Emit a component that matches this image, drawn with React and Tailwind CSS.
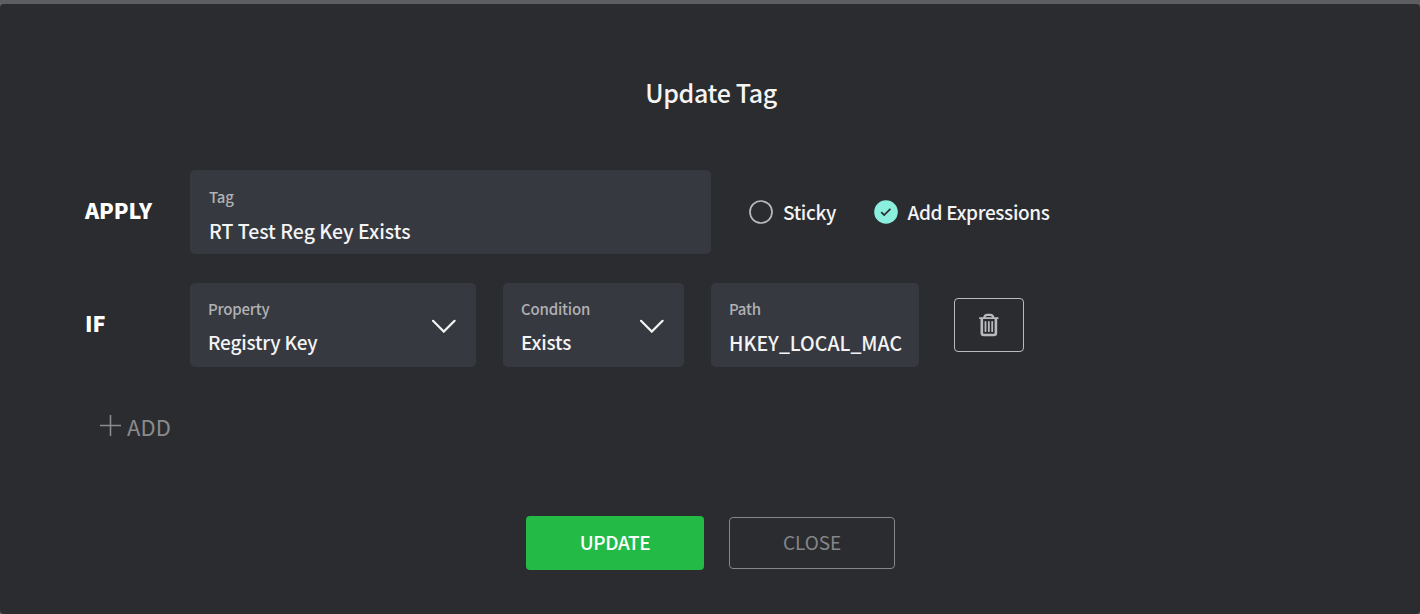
import { useState } from 'react';

const ChevronIcon = () => (
  <svg className="w-6 h-[14px] shrink-0" viewBox="0 0 24 14" fill="none" stroke="#f4f4f5" strokeWidth="2.2" strokeLinecap="round">
    <path d="M1 1.8 11.8 12.6 22.6 1.8" />
  </svg>
);

const TrashIcon = () => (
  <svg className="w-5 h-6" viewBox="0 0 20 24" fill="none" stroke="#b9babb" strokeLinecap="round" strokeLinejoin="round">
    <path d="M.9 5.1H18.8" strokeWidth="1.9" />
    <path d="M5.2 4.8C5.6 2.6 6.8 1.9 8.1 1.9h3.4c1.3 0 2.5.7 2.9 2.9" strokeWidth="2.2" />
    <path d="M2.8 6V20c0 1.3.8 2 2 2h10.1c1.2 0 2-.7 2-2V6" strokeWidth="2.6" />
    <path d="M6.5 9v9.2M9.85 9v9.2M13.2 9v9.2" strokeWidth="1.8" />
  </svg>
);

const CheckCircle = ({ checked }) => (
  <svg className="w-6 h-6 shrink-0" viewBox="0 0 24 24" fill="none">
    {checked ? (
      <>
        <circle cx="12" cy="12" r="11.8" fill="#8aefdc" />
        <path d="m7.2 12.1 3 3 6.2-6.2" stroke="#2b2c30" strokeWidth="1.7" />
      </>
    ) : (
      <circle cx="12" cy="12" r="11" stroke="#b8b9bb" strokeWidth="1.7" />
    )}
  </svg>
);

const SelectField = ({ label, value, className }) => (
  <button type="button" className={`${className} h-[84px] rounded-[5px] bg-[#373940] pl-[18px] pr-5 flex items-start justify-between text-left`}>
    <span className="flex flex-col pt-[14px]">
      <span className="text-[15px] leading-6 font-medium tracking-[-0.2px] text-[#b0b1b3]">{label}</span>
      <span className="mt-[6px] text-[19px] leading-[30px] font-medium tracking-[-0.2px] text-[#f4f4f5]">{value}</span>
    </span>
    <span className="pt-9">
      <ChevronIcon />
    </span>
  </button>
);

function App() {
  const [sticky, setSticky] = useState(false);
  const [expressions, setExpressions] = useState(true);

  return (
    <div className="h-[614px] w-[1420px] overflow-hidden bg-[#5d5e61] pt-1 font-['Noto_Sans_CJK_SC','Noto_Sans',sans-serif]">
      <div className="h-[610px] rounded-[4px] bg-[#2b2c30] pt-[68px]">
        <h1 className="pl-[2px] text-center text-[25px] leading-10 font-medium tracking-[-0.35px] text-[#f4f4f5]">Update Tag</h1>

        {/* Tag row */}
        <div className="mt-[58px] flex h-[84px] items-center pl-[85px]">
          <div className="w-[105px] pb-[5px] text-[21.5px] leading-8 font-black tracking-[-0.1px] text-white">APPLY</div>
          <div className="h-[84px] w-[521px] rounded-[5px] bg-[#373940] pt-[15px] pl-[19px]">
            <div className="text-[15px] leading-6 font-medium tracking-[-0.2px] text-[#b0b1b3]">Tag</div>
            <div className="mt-[7px] text-[19.5px] leading-[30px] font-medium text-[#f4f4f5]">RT Test Reg Key Exists</div>
          </div>
          <button type="button" onClick={() => setSticky(!sticky)} className="ml-[38px] mb-[1px] flex items-center gap-[10px]">
            <CheckCircle checked={sticky} />
            <span className="text-[19px] leading-[30px] font-medium tracking-[-0.35px] text-[#f4f4f5]">Sticky</span>
          </button>
          <button type="button" onClick={() => setExpressions(!expressions)} className="ml-[37.5px] mb-[1px] flex items-center gap-[10px]">
            <CheckCircle checked={expressions} />
            <span className="text-[19px] leading-[30px] font-medium tracking-[-0.35px] text-[#f4f4f5]">Add Expressions</span>
          </button>
        </div>

        {/* Expression row */}
        <div className="mt-[29px] flex h-[84px] items-center pl-[85px]">
          <div className="w-[105px] pb-[5px] text-[21.5px] leading-8 font-black tracking-[-0.1px] text-white">IF</div>
          <SelectField label="Property" value="Registry Key" className="w-[286px]" />
          <SelectField label="Condition" value="Exists" className="ml-[27px] w-[181px]" />
          <div className="ml-[27px] h-[84px] w-[208px] rounded-[5px] bg-[#373940] px-[18px] pt-[14px]">
            <div className="text-[15px] leading-6 font-medium tracking-[-0.2px] text-[#b0b1b3]">Path</div>
            <div className="mt-[7px] text-[19.5px] leading-[30px] font-medium whitespace-nowrap text-[#f4f4f5]">
              HKEY_LOCAL_MAC
            </div>
          </div>
          <button type="button" aria-label="Delete" className="ml-[35px] flex h-[54px] w-[70px] items-center justify-center rounded-[4px] border border-[#b9babb]">
            <TrashIcon />
          </button>
        </div>

        <button type="button" className="mt-[41px] ml-[100px] flex h-9 items-center gap-[6px] text-[22px] leading-9 tracking-[0.1px] text-[#8b8a8c]">
          <svg className="mb-[2px] w-[21px] h-[21px]" viewBox="0 0 21 21" stroke="currentColor" strokeWidth="1.6">
            <path d="M10.5 0v21M0 10.5h21" />
          </svg>
          ADD
        </button>

        {/* Actions */}
        <div className="mt-[72px] flex items-center gap-[25px] pl-[526px]">
          <button type="button" className="h-[54px] w-[178px] rounded-[4px] bg-[#23bb46] pb-[2px] text-[19px] font-medium tracking-[-0.35px] text-white">UPDATE</button>
          <button type="button" className="h-[52px] w-[166px] rounded-[4px] border border-[#858688] pb-[2px] text-[19px] tracking-[-0.1px] text-[#858688]">CLOSE</button>
        </div>
      </div>
    </div>
  );
}

export default App;
